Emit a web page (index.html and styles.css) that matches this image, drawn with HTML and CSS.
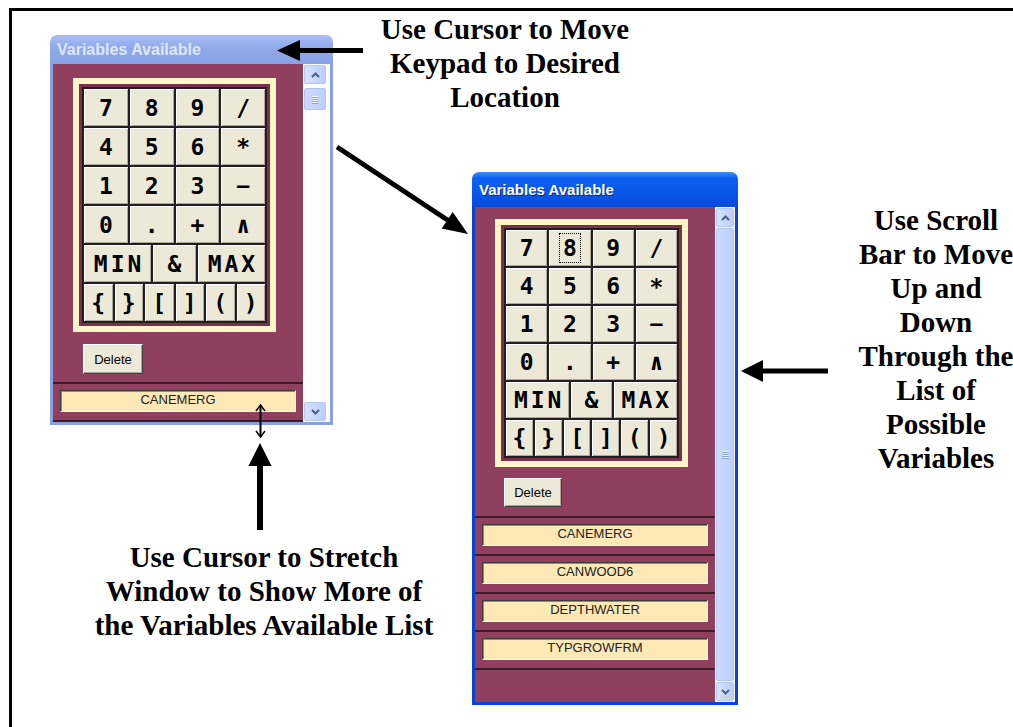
FILE: index.html
```html
<!doctype html>
<html>

<head>
    <title>Variables Available</title>
    <meta charset="UTF-8">
    <link rel="stylesheet" href="styles.css">
</head>

<body>
    <div class="canvas">
        <div class="sheet"></div>

        <!-- the small window, before it is stretched -->
        <div class="win win-back">
            <div class="titlebar">Variables Available</div>
            <div class="client">
                <div class="content">
                    <div class="pad">
                        <div class="pad-inner">
                            <div class="keys">
                                <div class="key-row">
                                    <span class="key">7</span><span class="key">8</span><span class="key">9</span><span class="key">/</span>
                                </div>
                                <div class="key-row">
                                    <span class="key">4</span><span class="key">5</span><span class="key">6</span><span class="key star">*</span>
                                </div>
                                <div class="key-row">
                                    <span class="key">1</span><span class="key">2</span><span class="key">3</span><span class="key">&minus;</span>
                                </div>
                                <div class="key-row">
                                    <span class="key">0</span><span class="key">.</span><span class="key">+</span><span class="key">&and;</span>
                                </div>
                                <div class="key-row">
                                    <span class="key wide">MIN</span><span class="key mid">&amp;</span><span class="key wide">MAX</span>
                                </div>
                                <div class="key-row">
                                    <span class="key">{</span><span class="key">}</span><span class="key">[</span><span class="key">]</span><span class="key">(</span><span class="key">)</span>
                                </div>
                            </div>
                        </div>
                    </div>
                    <button class="delete">Delete</button>
                    <div class="vars">
                        <div class="var"><span>CANEMERG</span></div>
                    </div>
                </div>
                <div class="scroll">
                    <div class="sbtn"><svg width="9" height="6" viewBox="0 0 9 6"><path d="M1 5 L4.5 1.5 L8 5" /></svg></div>
                    <div class="track">
                        <div class="thumb"><i class="grip"></i><i class="grip"></i><i class="grip"></i><i class="grip"></i></div>
                    </div>
                    <div class="sbtn"><svg width="9" height="6" viewBox="0 0 9 6"><path d="M1 1 L4.5 4.5 L8 1" /></svg></div>
                </div>
            </div>
        </div>

        <!-- the same window, stretched -->
        <div class="win win-front">
            <div class="titlebar">Variables Available</div>
            <div class="client">
                <div class="content">
                    <div class="pad">
                        <div class="pad-inner">
                            <div class="keys">
                                <div class="key-row">
                                    <span class="key">7</span><span class="key"><b class="focus">8</b></span><span class="key">9</span><span class="key">/</span>
                                </div>
                                <div class="key-row">
                                    <span class="key">4</span><span class="key">5</span><span class="key">6</span><span class="key star">*</span>
                                </div>
                                <div class="key-row">
                                    <span class="key">1</span><span class="key">2</span><span class="key">3</span><span class="key">&minus;</span>
                                </div>
                                <div class="key-row">
                                    <span class="key">0</span><span class="key">.</span><span class="key">+</span><span class="key">&and;</span>
                                </div>
                                <div class="key-row">
                                    <span class="key wide">MIN</span><span class="key mid">&amp;</span><span class="key wide">MAX</span>
                                </div>
                                <div class="key-row">
                                    <span class="key">{</span><span class="key">}</span><span class="key">[</span><span class="key">]</span><span class="key">(</span><span class="key">)</span>
                                </div>
                            </div>
                        </div>
                    </div>
                    <button class="delete">Delete</button>
                    <div class="vars">
                        <div class="var"><span>CANEMERG</span></div>
                        <div class="var"><span>CANWOOD6</span></div>
                        <div class="var"><span>DEPTHWATER</span></div>
                        <div class="var"><span>TYPGROWFRM</span></div>
                    </div>
                </div>
                <div class="scroll">
                    <div class="sbtn"><svg width="9" height="6" viewBox="0 0 9 6"><path d="M1 5 L4.5 1.5 L8 5" /></svg></div>
                    <div class="track">
                        <div class="thumb"><i class="grip"></i><i class="grip"></i><i class="grip"></i><i class="grip"></i></div>
                    </div>
                    <div class="sbtn"><svg width="9" height="6" viewBox="0 0 9 6"><path d="M1 1 L4.5 4.5 L8 1" /></svg></div>
                </div>
            </div>
        </div>

        <!-- callouts -->
        <p class="note note-top">Use Cursor to Move<br>Keypad to Desired<br>Location</p>
        <p class="note note-right">Use Scroll<br>Bar to Move<br>Up and<br>Down<br>Through the<br>List of<br>Possible<br>Variables</p>
        <p class="note note-bottom">Use Cursor to Stretch<br>Window to Show More of<br>the Variables Available List</p>

        <svg class="arrows" width="1013" height="727" viewBox="0 0 1013 727">
            <!-- to title bar -->
            <rect x="296" y="48" width="67" height="5" />
            <polygon points="277,50.5 300,40 300,61" />
            <!-- keypad moved -->
            <line x1="337" y1="147" x2="449" y2="221" stroke="#000" stroke-width="5" />
            <polygon points="468,234 441.7,228.5 452.7,211.9" />
            <!-- to scroll bar -->
            <rect x="760" y="368.5" width="68" height="5" />
            <polygon points="741,371 763,360 763,382" />
            <!-- resize cursor -->
            <line x1="260.5" y1="406" x2="260.5" y2="436" stroke="#000" stroke-width="2" />
            <polyline points="256,411 260.5,405 265,411" fill="none" stroke="#000" stroke-width="1.5" />
            <polyline points="256,431 260.5,437 265,431" fill="none" stroke="#000" stroke-width="1.5" />
            <!-- up to the cursor -->
            <rect x="257" y="463" width="6" height="67" />
            <polygon points="260,443 248.5,466 271.5,466" />
        </svg>
    </div>
</body>

</html>
```

FILE: styles.css
```css
body {
    margin: 0;
    background: #fff;
}

.canvas {
    position: relative;
    width: 1013px;
    height: 727px;
    overflow: hidden;
}

.sheet {
    margin: 8px 0 0 9px;
    height: 716px;
    border-top: 3px solid #000;
    border-left: 3px solid #000;
}

/* windows */
.win {
    position: absolute;
    display: flex;
    flex-direction: column;
}

.win-back {
    left: 50px;
    top: 35px;
    width: 283px;
    height: 390px;
}

.win-front {
    left: 472px;
    top: 172px;
    width: 266px;
    height: 533px;
}

.titlebar {
    display: flex;
    align-items: center;
    padding-left: 7px;
    border-radius: 7px 7px 0 0;
    font: bold 15px "Liberation Sans", Arial, sans-serif;
}

.win-back .titlebar {
    height: 29px;
    color: #dfe7fa;
    background: linear-gradient(#a9bef3, #8fa9ea 45%, #89a2e5);
    font-size: 16px;
}

.win-front .titlebar {
    height: 35px;
    color: #fff;
    background: linear-gradient(#3d8eff, #0c60f0 18%, #0a58e7 60%, #0848d9);
    text-shadow: 1px 1px #0a2b8c;
}

.client {
    flex: 1;
    display: flex;
    min-height: 0;
    border: 3px solid;
    border-top: 0;
}

.win-back .client {
    border-color: #8ba0e2;
}

.win-front .client {
    border-color: #0843d8;
}

.content {
    flex: 1;
    display: flex;
    flex-direction: column;
    overflow: hidden;
    background: #903f5e;
}

/* keypad */
.pad {
    margin: 12px 27px 0 20px;
    padding: 6px;
    background: #fff6c6;
}

.win-back .pad {
    margin-top: 14px;
}

.pad-inner {
    padding: 3px;
    background: #7a3150;
}

.keys {
    display: flex;
    flex-direction: column;
    gap: 2px;
    padding: 2px;
    background: #241c1f;
}

.key-row {
    display: flex;
    gap: 2px;
    height: 36px;
}

.win-back .key-row {
    height: 37px;
}

.key {
    flex: 1;
    display: flex;
    align-items: center;
    justify-content: center;
    background: #ece9d8;
    box-shadow: inset 1px 1px #fff, inset -1px -1px #aca899;
    font: bold 23px "DejaVu Sans Mono", monospace;
    color: #000;
}

.key.wide {
    flex: 3;
    letter-spacing: 3px;
    padding-left: 3px;
}

.key.mid {
    flex: 2;
}

.key.star {
    align-items: flex-start;
    padding-top: 6px;
}

.focus {
    font-weight: bold;
    padding: 1px 3px;
    outline: 1px dotted #000;
}

.delete {
    align-self: flex-start;
    margin: 11px 0 0 29px;
    width: 58px;
    height: 29px;
    padding: 0;
    background: #ece9d8;
    border: 1px solid;
    border-color: #fff #404040 #404040 #fff;
    box-shadow: inset -1px -1px #aca899;
    font: 13px "Liberation Sans", Arial, sans-serif;
    color: #000;
}

.win-back .delete {
    margin: 12px 0 0 30px;
    width: 60px;
    height: 30px;
}

/* variable list */
.vars {
    margin-top: 9px;
    border-bottom: 2px solid #3b1c26;
}

.win-back .vars {
    margin-top: 8px;
}

.var {
    padding: 6px 7px 8px;
    border-top: 2px solid #3b1c26;
}

.var span {
    display: block;
    height: 22px;
    box-sizing: border-box;
    padding-top: 1px;
    line-height: 19px;
    text-align: center;
    background: #fde8b6;
    border: 1px solid;
    border-color: #3c3c3c #fff #fff #3c3c3c;
    box-shadow: inset 1px 1px #8a8a8a;
    font: 13px "Liberation Sans", Arial, sans-serif;
    color: #222;
}

/* scroll bar */
.scroll {
    width: 20px;
    display: flex;
    flex-direction: column;
    padding: 1px 0;
    background: #f7f7f4;
}

.win-back .scroll {
    width: 24px;
    padding-right: 3px;
    background: #fdfdfd;
}

.sbtn {
    height: 17px;
    margin: 0 1px;
    display: flex;
    align-items: center;
    justify-content: center;
    border: 1px solid #b7c7f0;
    border-radius: 2px;
    background: linear-gradient(90deg, #d6e2fd, #bccdfa);
}

.sbtn path {
    fill: none;
    stroke: #4d6185;
    stroke-width: 2;
}

.track {
    flex: 1;
    display: flex;
    flex-direction: column;
    padding: 1px 0;
}

.thumb {
    margin: 0 1px;
    display: flex;
    flex-direction: column;
    align-items: center;
    justify-content: center;
    gap: 1px;
    border: 1px solid #b2c5f4;
    border-radius: 2px;
    background: linear-gradient(90deg, #cbd9fc, #bdcffa);
}

.win-front .thumb {
    flex: 1;
}

.win-back .thumb {
    height: 20px;
    margin-top: 3px;
}

.grip {
    width: 7px;
    height: 1px;
    background: #eef3ff;
    box-shadow: 0 1px #8ca5e2;
}

/* callouts */
.note {
    position: absolute;
    margin: 0;
    text-align: center;
    font: bold 29px/34px "Liberation Serif", "Times New Roman", serif;
    color: #000;
    white-space: nowrap;
}

.note-top {
    left: 345px;
    top: 12px;
    width: 320px;
}

.note-right {
    left: 836px;
    top: 203px;
    width: 200px;
}

.note-bottom {
    left: 64px;
    top: 540px;
    width: 400px;
}

.arrows {
    position: absolute;
    left: 0;
    top: 0;
}
```
